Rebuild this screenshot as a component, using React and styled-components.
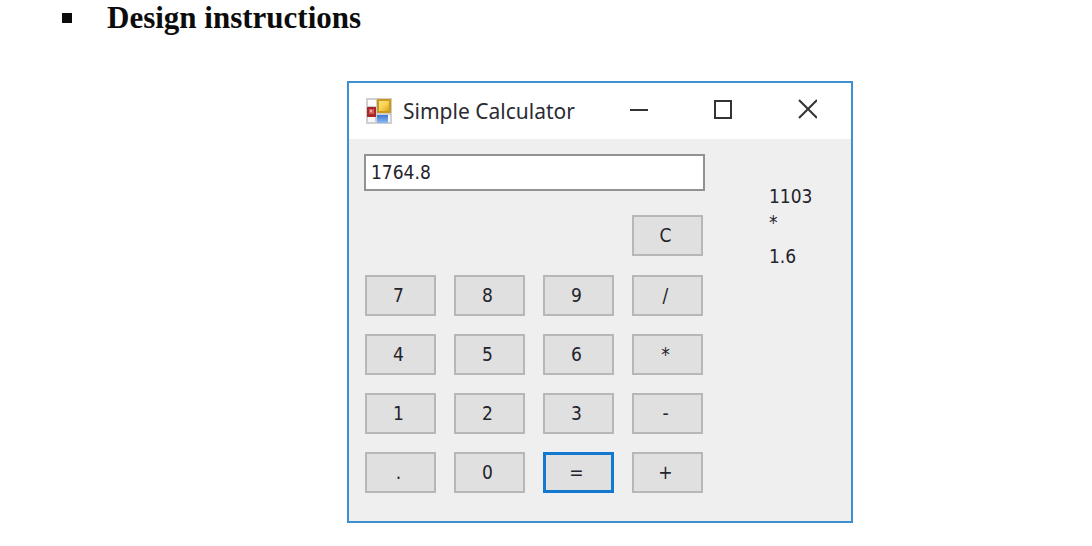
import React, { useState } from "react";
import styled, { createGlobalStyle } from "styled-components";

const GlobalStyle = createGlobalStyle`
  *, *::before, *::after { box-sizing: border-box; }
  body { margin: 0; background: #fff; }
`;

const Page = styled.main`
  padding: 0 0 24px;
`;

const Instructions = styled.ul`
  list-style: none;
  margin: 0;
  padding: 0 0 0 62px;
`;

const Instruction = styled.li`
  display: flex;
  align-items: center;
  gap: 35px;
  font: bold 31px/36px "Liberation Serif", "Times New Roman", serif;
  color: #0c0c0c;

  &::before {
    content: "";
    width: 10px;
    height: 10px;
    background: #0c0c0c;
  }
`;

const Figure = styled.div`
  display: flex;
  justify-content: center;
  padding: 45px 0 0 108px;
`;

const Window = styled.section`
  flex: 0 1 506px;
  border: 2px solid #3f90d0;
  background: #efefef;
`;

const TitleBar = styled.header`
  display: flex;
  align-items: center;
  height: 56px;
  padding-left: 17px;
  background: #fff;
`;

const AppIcon = styled.svg`
  width: 26px;
  height: 26px;
  margin-right: 11px;
`;

const Title = styled.h1`
  flex: 1;
  margin: 0;
  font: 21px/28px "Noto Sans", "Segoe UI", sans-serif;
  color: #2b2b33;
  white-space: nowrap;
`;

const WindowControls = styled.div`
  display: flex;
  margin-right: 2px;
`;

const WindowButton = styled.button`
  display: grid;
  place-items: center;
  width: 84px;
  height: 56px;
  padding: 0 0 4px;
  border: 0;
  background: none;

  svg {
    width: 20px;
    height: 20px;
    fill: none;
    stroke: #333;
    stroke-width: 2;
  }
`;

const Body = styled.div`
  display: flex;
  justify-content: space-between;
  padding: 15px 38px 28px 15px;
  font: 19px/24px "DejaVu Sans Condensed", Tahoma, sans-serif;
  color: #24242c;
`;

const Calculator = styled.div`
  display: flex;
  flex-direction: column;
  align-items: flex-end;
  width: 341px;
`;

const Display = styled.input`
  width: 100%;
  height: 37px;
  padding: 0 5px 2px;
  border: 2px solid #929292;
  border-radius: 0;
  outline: none;
  background: #fff;
  font: inherit;
  color: inherit;
`;

const Keypad = styled.div`
  display: grid;
  grid-template-columns: repeat(4, 71px);
  gap: 18px;
  margin: 19px 2px 0 0;
`;

const Key = styled.button`
  width: 71px;
  height: 41px;
  padding: 0 4px 2px 0;
  border: ${(p) => (p.$focused ? "3px solid #1279cf" : "2px solid #b7b7b7")};
  border-radius: 0;
  background: #e0e0e0;
  font: inherit;
  color: inherit;
`;

const ClearKey = styled(Key)`
  margin: 24px 2px 0 0;
`;

const Operation = styled.div`
  display: flex;
  flex-direction: column;
  gap: 6px;
  width: 44px;
  padding-top: 30px;
`;

const Operator = styled.div`
  height: 24px;
  line-height: 16px;
`;

const KEYS = ["7", "8", "9", "/", "4", "5", "6", "*", "1", "2", "3", "-", ".", "0", "=", "+"];

function FormIcon() {
  return (
    <AppIcon viewBox="0 0 26 26" aria-hidden="true">
      <defs>
        <linearGradient id="gold" x1="0" y1="0" x2="1" y2="1">
          <stop offset="0" stopColor="#fbe27c" />
          <stop offset="0.5" stopColor="#f8d250" />
          <stop offset="1" stopColor="#d9a520" />
        </linearGradient>
        <linearGradient id="sky" x1="0" y1="0" x2="0" y2="1">
          <stop offset="0" stopColor="#3f78d2" />
          <stop offset="1" stopColor="#8fb8f2" />
        </linearGradient>
      </defs>
      <rect width="26" height="26" fill="#cfcfd2" />
      <rect x="2" y="2" width="8" height="6" fill="#fff" />
      <rect x="2" y="19" width="7" height="5" fill="#f6f6f6" />
      <rect x="22" y="17" width="2" height="7" fill="#f6f6f6" />
      <rect x="11" y="1" width="14" height="14" fill="#c99a22" />
      <rect x="13" y="3" width="10" height="10" fill="url(#gold)" />
      <rect x="1" y="9" width="9" height="10" fill="#a8282a" />
      <rect x="3" y="11" width="5" height="5" fill="#d4605a" />
      <rect x="4" y="12" width="2" height="2" fill="#f0aaa4" />
      <rect x="11" y="17" width="11" height="8" fill="url(#sky)" />
    </AppIcon>
  );
}

export default function App() {
  const [value, setValue] = useState("1764.8");

  return (
    <>
      <GlobalStyle />
      <Page>
        <Instructions>
          <Instruction>Design instructions</Instruction>
        </Instructions>
        <Figure>
          <Window>
            <TitleBar>
              <FormIcon />
              <Title>Simple Calculator</Title>
              <WindowControls>
                <WindowButton aria-label="Minimize">
                  <svg viewBox="0 0 20 20"><path d="M1 11H19" /></svg>
                </WindowButton>
                <WindowButton aria-label="Maximize">
                  <svg viewBox="0 0 20 20"><path d="M2 2H18V19H2Z" /></svg>
                </WindowButton>
                <WindowButton aria-label="Close">
                  <svg viewBox="0 0 20 20"><path d="M2 1L20 19M20 1L2 19" /></svg>
                </WindowButton>
              </WindowControls>
            </TitleBar>
            <Body>
              <Calculator>
                <Display
                  aria-label="Result"
                  value={value}
                  onChange={(e) => setValue(e.target.value)}
                />
                <ClearKey onClick={() => setValue("")}>C</ClearKey>
                <Keypad>
                  {KEYS.map((k) => (
                    <Key key={k} $focused={k === "="}>{k}</Key>
                  ))}
                </Keypad>
              </Calculator>
              <Operation>
                <div>1103</div>
                <Operator>*</Operator>
                <div>1.6</div>
              </Operation>
            </Body>
          </Window>
        </Figure>
      </Page>
    </>
  );
}
